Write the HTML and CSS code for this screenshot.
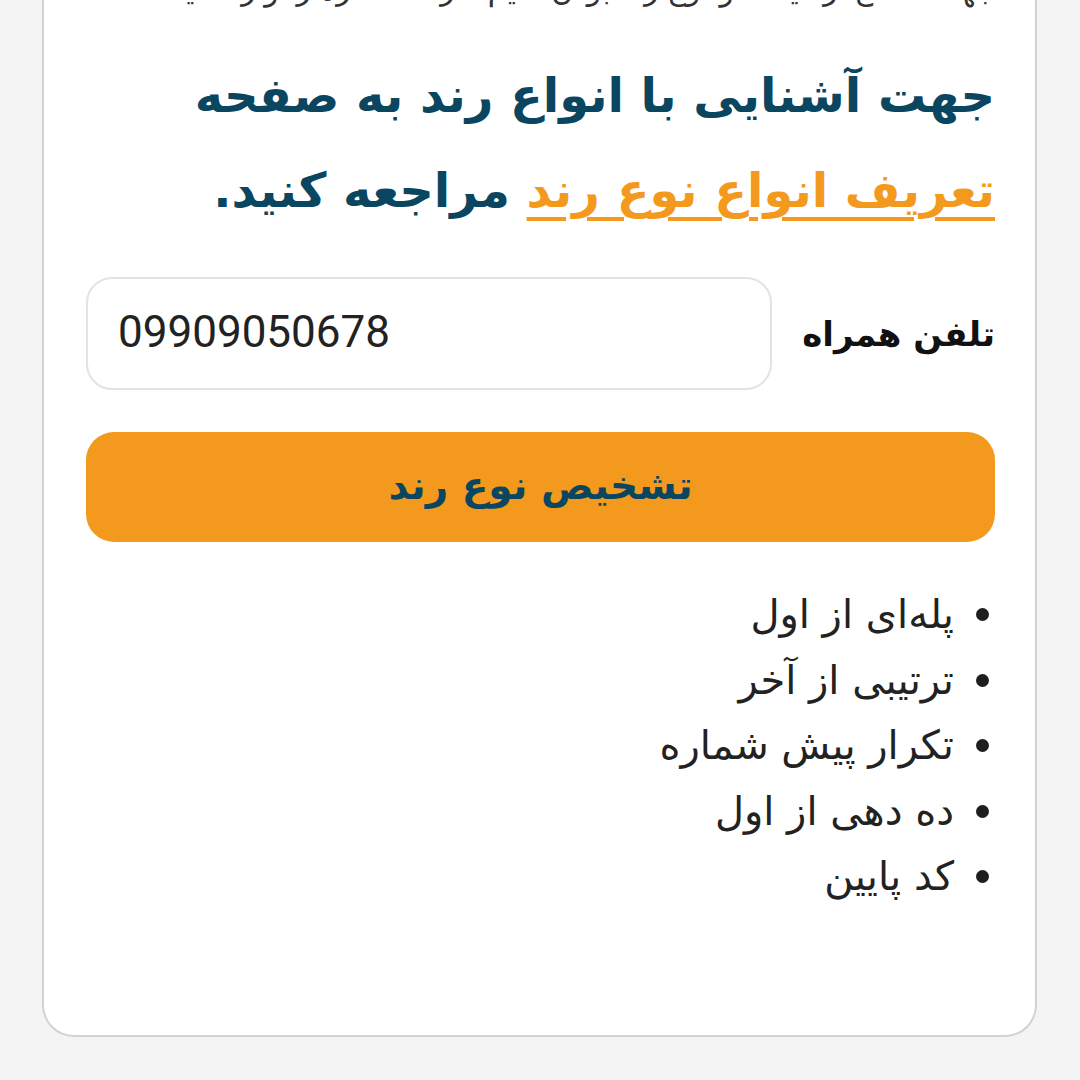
FILE: index.html
```html
<!DOCTYPE html>
<html lang="fa" dir="rtl">
<head>
<meta charset="utf-8">
<title>تشخیص نوع رند</title>
<link rel="stylesheet" href="styles.css">
</head>
<body>
<div class="card">
  <p class="cut">جهت اطلاع از قیمت و نوع رند بودن سیم کارت شماره را وارد کنید</p>
  <h2 class="title">جهت آشنایی با انواع رند به صفحه<br><a href="#" class="link">تعریف انواع نوع رند</a> مراجعه کنید.</h2>
  <div class="field">
    <label class="label">تلفن همراه</label>
    <div class="input" dir="ltr">09909050678</div>
  </div>
  <button class="btn">تشخیص نوع رند</button>
  <ul class="types">
    <li>پله‌ای از اول</li>
    <li>ترتیبی از آخر</li>
    <li>تکرار پیش شماره</li>
    <li>ده دهی از اول</li>
    <li>کد پایین</li>
  </ul>
</div>
</body>
</html>
```
FILE: styles.css
```css
html, body {
  margin: 0;
  padding: 0;
  background: #f4f4f4;
}
body {
  font-family: "DejaVu Sans", sans-serif;
  width: 1080px;
  height: 1080px;
  overflow: hidden;
}
.card {
  margin: 0 43px 0 42px;
  height: 1037px;
  box-sizing: border-box;
  background: #fff;
  border: 2px solid #d2d2d2;
  border-top: none;
  border-radius: 0 0 32px 32px;
  padding: 0 40px 0 42px;
  overflow: hidden;
}
.cut {
  margin: -28px 0 0;
  font-size: 30px;
  line-height: 36px;
  color: #333;
  white-space: nowrap;
  text-align: right;
}
.title {
  margin: 40px 0 0;
  font-size: 48px;
  line-height: 95px;
  font-weight: bold;
  color: #0b4660;
}
.link {
  color: #f39a1e;
  text-decoration: underline;
  text-decoration-thickness: 4px;
  text-underline-offset: 10px;
}
.field {
  display: flex;
  align-items: center;
  justify-content: space-between;
  gap: 16px;
  margin-top: 39px;
}
.label {
  font-size: 34px;
  font-weight: bold;
  color: #111;
  white-space: nowrap;
}
.input {
  flex: none;
  width: 686px;
  height: 113px;
  box-sizing: border-box;
  border: 2px solid #e3e3e3;
  border-radius: 26px;
  padding: 0 30px 4px;
  display: flex;
  align-items: center;
  font-family: Roboto, sans-serif;
  font-size: 44px;
  color: #222;
}
.btn {
  display: block;
  width: 100%;
  height: 110px;
  margin-top: 42px;
  border: none;
  border-radius: 28px;
  background: #f39a1e;
  color: #0b4660;
  font-family: "DejaVu Sans", sans-serif;
  font-weight: bold;
  font-size: 39px;
  padding: 0 0 4px;
}
.types {
  list-style: none;
  margin: 40px 0 0;
  padding: 0 6px 0 0;
  font-size: 40px;
  line-height: 65.5px;
  color: #222;
}
.types li {
  display: flex;
  align-items: center;
  gap: 22px;
}
.types li::before {
  content: "";
  width: 13px;
  height: 13px;
  border-radius: 50%;
  background: #1e1e1e;
  flex: none;
}
```
